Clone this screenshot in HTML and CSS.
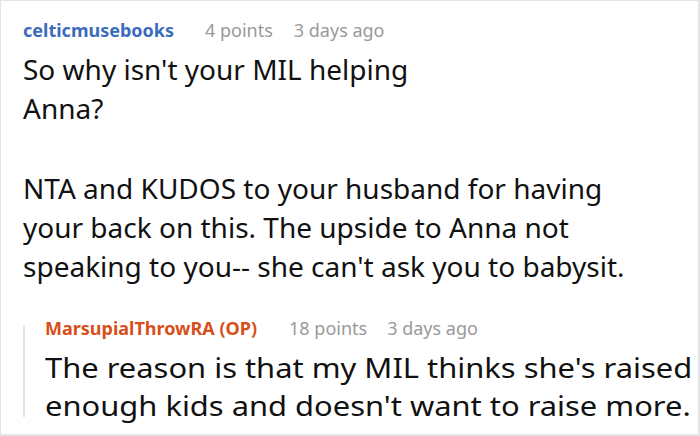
FILE: index.html
```html
<!DOCTYPE html>
<html>
<head>
<meta charset="utf-8">
<link rel="stylesheet" href="styles.css">
</head>
<body>
<div class="card">
  <div class="comment">
    <div class="meta">
      <span class="author">celticmusebooks</span>
      <span class="info">4 points</span>
      <span class="info">3 days ago</span>
    </div>
    <div class="text">
      <p>So why isn't your MIL helping<br>Anna?</p>
      <p>NTA and KUDOS to your husband for having<br>your back on this. The upside to Anna not<br>speaking to you-- she can't ask you to babysit.</p>
    </div>
  </div>
  <div class="reply">
    <div class="rule"></div>
    <div class="reply-body">
      <div class="meta">
        <span class="author op">MarsupialThrowRA (OP)</span>
        <span class="info">18 points</span>
        <span class="info">3 days ago</span>
      </div>
      <div class="text reply-text">
        <p>The reason is that my MIL thinks she's raised<br>enough kids and doesn't want to raise more.</p>
      </div>
    </div>
  </div>
</div>
</body>
</html>
```
FILE: styles.css
```css
html, body {
  margin: 0;
  padding: 0;
  background: #fff;
}
.card {
  box-sizing: border-box;
  width: 700px;
  height: 436px;
  border-style: solid;
  border-color: #e4e4e4;
  border-width: 1px 2px 2px 1px;
  padding: 17px 0 0 22px;
  overflow: hidden;
  font-family: "Noto Sans", "Open Sans", sans-serif;
}
.meta {
  display: flex;
  font-size: 18px;
  line-height: 24px;
  white-space: nowrap;
}
.author {
  font-weight: bold;
  color: #3b6bbd;
  margin-right: 31px;
}
.author.op {
  color: #d84f1c;
  margin-right: 32px;
}
.info {
  color: #999;
  margin-right: 21px;
}
.reply .info {
  margin-right: 20px;
}
.text {
  font-size: 28px;
  line-height: 39px;
  color: #111;
  margin-top: 8px;
  white-space: nowrap;
}
.text p {
  margin: 0 0 41px 0;
}
.text p:last-child {
  margin-bottom: 0;
}
.reply {
  display: flex;
  margin-top: 30px;
}
.rule {
  width: 2px;
  background: #e2e2e2;
  margin: 9px 0 7px 0;
  flex: none;
}
.reply-body {
  padding-left: 20px;
}
.reply-text {
  font-size: 28px;
  line-height: 38px;
  transform: scaleX(1.103);
  transform-origin: left center;
}
```
